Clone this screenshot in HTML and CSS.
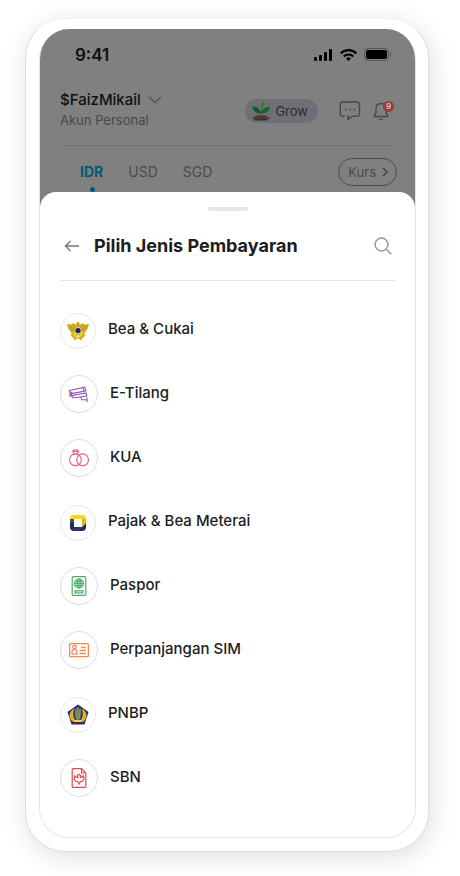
FILE: index.html
```html
<!DOCTYPE html>
<html lang="id">
<head>
    <meta charset="UTF-8">
    <meta name="viewport" content="width=device-width, initial-scale=1.0">
    <title>Pilih Jenis Pembayaran</title>
    <link rel="stylesheet" href="styles.css">
</head>
<body>
    <div class="phone">
        <div class="screen">
            <header class="home">
                <div class="status-bar">
                    <span class="time">9:41</span>
                    <svg class="status-icons" width="78" height="14" viewBox="0 0 78 14">
                        <rect x="0" y="9" width="3" height="4" rx="1"/>
                        <rect x="5" y="7" width="3" height="6" rx="1"/>
                        <rect x="10" y="4" width="3" height="9" rx="1"/>
                        <rect x="15" y="1" width="3" height="12" rx="1"/>
                        <g fill="none" stroke="#000" stroke-width="2.2">
                            <path d="M26.7 5.4a11 11 0 0 1 15.6 0"/>
                            <path d="M29.7 8.5a6.8 6.8 0 0 1 9.6 0"/>
                        </g>
                        <path d="M34.5 13l-2.5-2.6a3.6 3.6 0 0 1 5 0z"/>
                        <rect x="50.5" y=".5" width="24" height="12" rx="3.5" fill="none" stroke="#555"/>
                        <rect x="52" y="2" width="21" height="9" rx="2"/>
                        <path d="M76 4.5c1.600.6 1.600 3.400 0 4z" fill="#555"/>
                    </svg>
                </div>
                <div class="account">
                    <div class="account-info">
                        <button class="account-name" type="button">$FaizMikail
                            <svg width="14" height="8" viewBox="0 0 14 8"><path d="M1 1l6 5.500L13 1" fill="none" stroke="#555" stroke-width="1.500"/></svg>
                        </button>
                        <p class="account-type">Akun Personal</p>
                    </div>
                    <button class="grow" type="button">
                        <svg width="20" height="20" viewBox="0 0 20 20">
                            <path d="M2 17h16l-2 2.500H4z" fill="#35303a"/>
                            <path d="M1 16h18v1.400H1z" fill="#4f4852"/>
                            <ellipse cx="10" cy="15.500" rx="6.500" ry="1.300" fill="#5c3217"/>
                            <path d="M10 15.500c0-3 .4-5 1.200-8" fill="none" stroke="#24702f" stroke-width="1.200"/>
                            <path d="M10 12.500C6 13 2.500 10.500 1 5.500c5 0 8 2 9 7z" fill="#0c5d27"/>
                            <path d="M10.500 12c.5-4 3.500-6 8-6 0 4-3 7-8 6z" fill="#15672b"/>
                            <path d="M10.500 8C9 5 10 2 13 0c1.200 3 .5 6-2.500 8z" fill="#3a7b2a"/>
                        </svg>
                        Grow
                    </button>
                    <button class="chat" type="button" aria-label="Pesan">
                        <svg width="22" height="20" viewBox="0 0 22 20">
                            <path d="M5.500 15.300H3.500A2.200 2.200 0 0 1 1.300 13V3.300A2.200 2.200 0 0 1 3.500 1h14.800a2.200 2.200 0 0 1 2.200 2.300V13a2.200 2.200 0 0 1-2.200 2.300h-5L9 18.500v-3.200H8" fill="none" stroke="#484848" stroke-width="1.400"/>
                            <g fill="#484848"><circle cx="6.500" cy="8.500" r=".9"/><circle cx="11" cy="8.500" r=".9"/><circle cx="15.500" cy="8.500" r=".9"/></g>
                        </svg>
                    </button>
                    <button class="bell" type="button" aria-label="Notifikasi">
                        <svg width="16" height="20" viewBox="0 0 16 20">
                            <path d="M8 2.500C4.700 2.500 3 5 3 8v4l-1.800 2.500v1h13.600v-1L13 12V8c0-3-1.700-5.500-5-5.500z" fill="none" stroke="#484848" stroke-width="1.300" stroke-linejoin="round"/>
                            <path d="M6 17.500c.8 1.700 3.200 1.700 4 0" fill="none" stroke="#484848" stroke-width="1.300"/>
                        </svg>
                        <span class="badge">9</span>
                    </button>
                </div>
                <nav class="currencies">
                    <a class="currency active" href="#idr">IDR</a>
                    <a class="currency" href="#usd">USD</a>
                    <a class="currency" href="#sgd">SGD</a>
                    <button class="rates" type="button">Kurs
                        <svg width="6" height="10" viewBox="0 0 6 10"><path d="M1 .8L5 5 1 9.200" fill="none" stroke="#404040" stroke-width="1.400"/></svg>
                    </button>
                </nav>
            </header>

            <main class="sheet">
                <div class="handle"></div>
                <div class="sheet-header">
                    <button type="button" aria-label="Kembali">
                        <svg width="16" height="12" viewBox="0 0 16 12"><path d="M15 6H1.500M6.500 1l-5 5 5 5" fill="none" stroke="#777" stroke-width="1.400"/></svg>
                    </button>
                    <h1>Pilih Jenis Pembayaran</h1>
                    <button type="button" aria-label="Cari">
                        <svg width="18" height="18" viewBox="0 0 18 18"><circle cx="7.500" cy="7.500" r="6.400" fill="none" stroke="#999" stroke-width="1.500"/><path d="M12 12l5.300 5.300" stroke="#999" stroke-width="1.600"/></svg>
                    </button>
                </div>
                <ul class="payments">
                    <li><a class="payment" href="#bea-cukai">
                        <span class="logo small">
                            <svg width="24" height="24" viewBox="0 0 24 24">
                                <path d="M1 5l4 .5L8 4l2 2 1-3h2l1 3 2-2 3 1.500 4-.5-1.500 5-3 4 .5 3-2.500 2-1 2.500-2-1.500h-3l-2 1.500-1-2.500-2.500-2 .5-3-3-4z" fill="#d9ad18"/>
                                <path d="M2 6.500l7 4M3.500 9.500l5 2M22 6.500l-7 4M20.500 9.500l-5 2M12 3v5M7 6l3 3M17 6l-3 3" stroke="#a88717" stroke-width=".6" fill="none"/>
                                <path d="M8 13c0 3 1 4.500 4 5 3-.5 4-2 4-5" fill="none" stroke="#f4d958" stroke-width="1.300"/>
                                <circle cx="12" cy="11.500" r="3.600" fill="#c8c7c2"/>
                                <circle cx="12" cy="11.500" r="2.600" fill="#20274c"/>
                                <path d="M12 15.500v4" stroke="#fff" stroke-width=".8"/>
                            </svg>
                        </span>
                        <span class="name">Bea &amp; Cukai</span>
                    </a></li>
                    <li><a class="payment" href="#e-tilang">
                        <span class="logo">
                            <svg width="24" height="24" viewBox="0 0 24 24" fill="none" stroke="#9254b5" stroke-width="1.100">
                                <path d="M2.300 8.500l15.500-3.300 1.200 3.600-15.500 3zM4.500 12v1.500l14.500-2.500.8 3-13.800 2-1-2.500M16 6l1 3.200M5.500 10.200H3v4h2.500M13.800 15.200l1 2.500h5.200M20 15.500V20"/>
                            </svg>
                        </span>
                        <span class="name">E-Tilang</span>
                    </a></li>
                    <li><a class="payment" href="#kua">
                        <span class="logo">
                            <svg width="24" height="24" viewBox="0 0 24 24" fill="none" stroke="#f0618c" stroke-width="1.200">
                                <circle cx="8.400" cy="13.800" r="5.900"/>
                                <circle cx="15.600" cy="13.800" r="5.900"/>
                                <path d="M7 8L5.800 5.500 6.600 4.200h4l.8 1.300L10.200 8zM5.800 5.500h5.600"/>
                            </svg>
                        </span>
                        <span class="name">KUA</span>
                    </a></li>
                    <li><a class="payment" href="#pajak">
                        <span class="logo small">
                            <svg width="24" height="24" viewBox="0 0 24 24">
                                <path d="M4 8a4 4 0 0 1 4-4h8a4 4 0 0 1 4 4v8h-4V8H8l-4 4z" fill="#fbd713"/>
                                <path d="M4 8l4 3v5h8l4-4v4a4 4 0 0 1-4 4H8a4 4 0 0 1-4-4z" fill="#202a57"/>
                                <path d="M16 8h4v4l-4 4z" fill="#e9b713"/>
                                <path d="M8 8H4v4l4-1z" fill="#53502f"/>
                                <path d="M8 16h8l-2 4H8z" fill="#2b3766"/>
                            </svg>
                        </span>
                        <span class="name">Pajak &amp; Bea Meterai</span>
                    </a></li>
                    <li><a class="payment" href="#paspor">
                        <span class="logo">
                            <svg width="24" height="24" viewBox="0 0 24 24" fill="none" stroke="#4fad68" stroke-width="1.200">
                                <rect x="5.200" y="2.700" width="13.600" height="18.600" rx="1"/>
                                <circle cx="12" cy="9.500" r="4.500"/>
                                <ellipse cx="12" cy="9.500" rx="2" ry="4.500"/>
                                <path d="M12 5v9M7.500 9.500h9M8.200 7.300h7.600M8.200 11.700h7.600M8 18.800v-2h8v2z"/>
                            </svg>
                        </span>
                        <span class="name">Paspor</span>
                    </a></li>
                    <li><a class="payment" href="#sim">
                        <span class="logo">
                            <svg width="24" height="24" viewBox="0 0 24 24" fill="none" stroke="#ef8a55" stroke-width="1.300">
                                <rect x="2.600" y="5.600" width="18.800" height="13" rx="1.200"/>
                                <circle cx="7.500" cy="9" r="1.700"/>
                                <path d="M5 16.200v-2.500a2 2 0 0 1 2-2h1a2 2 0 0 1 2 2v2.500zM14 9.500h5M12.500 12.500H19M12.500 15.500H19"/>
                            </svg>
                        </span>
                        <span class="name">Perpanjangan SIM</span>
                    </a></li>
                    <li><a class="payment" href="#pnbp">
                        <span class="logo small">
                            <svg width="24" height="24" viewBox="0 0 24 24">
                                <path d="M12 1.500L22.500 9 18.500 21.500h-13L1.500 9z" fill="#332778"/>
                                <path d="M8.500 5.500c-6 3-6.500 9-2 13h11c4.500-4 4-10-2-13 2 4 1.500 9-1 12h-5c-2.500-3-3-8-1-12z" fill="#dfb51e"/>
                                <path d="M9.500 5h5l1 7-2 5h-3l-2-5z" fill="#316d78"/>
                                <path d="M12 4v14M9.800 6l.7 10M14.200 6l-.7 10" stroke="#d4b02c" stroke-width=".8"/>
                                <path d="M8 17h8v2H8z" fill="#f2cf42"/>
                            </svg>
                        </span>
                        <span class="name">PNBP</span>
                    </a></li>
                    <li><a class="payment" href="#sbn">
                        <span class="logo">
                            <svg width="24" height="24" viewBox="0 0 24 24" fill="none" stroke="#e34b4b" stroke-width="1.200">
                                <path d="M14.500 2.600H6.200a1 1 0 0 0-1 1v16.800a1 1 0 0 0 1 1h11.600a1 1 0 0 0 1-1V7zV7h4.300"/>
                                <path d="M10.300 9.500L12 8.300l1.700 1.200-.5 2h1.500l1.800-1.700.5 3.200-2 2.500h-1.500L12 18l-1.500-2.500H9L7 13l.5-3.200 1.800 1.700h1.500z"/>
                            </svg>
                        </span>
                        <span class="name">SBN</span>
                    </a></li>
                </ul>
            </main>
        </div>
    </div>
</body>
</html>
```
FILE: styles.css
```css
* { box-sizing: border-box; }
body { margin: 0; padding: 18px 31px 25px 25px; background: #fff; color: #1c1c1e; font-family: Inter, "Liberation Sans", sans-serif; }
h1, p, ul { margin: 0; padding: 0; }
ul { list-style: none; }
a { color: inherit; text-decoration: none; }
button { display: flex; align-items: center; margin: 0; padding: 0; border: none; background: none; color: inherit; font: inherit; cursor: pointer; }
svg { display: block; flex: none; }

.phone { padding: 10px 12px 13px 13px; border: 1px solid #dedede; border-top-color: #f2f2f2; border-radius: 40px; background: #fff; box-shadow: 2px 5px 26px rgba(0, 0, 0, 0.13); }
.screen { overflow: hidden; border: 1px solid #e4e4e4; border-top: none; border-radius: 30px; background: #fff; }

.home { padding: 0 20px 16px; background: #808080; }
.status-bar { display: flex; align-items: center; justify-content: space-between; height: 52px; padding: 0 3px 0 15px; }
.time { color: #101011; font-size: 17px; font-weight: 600; line-height: 20px; }

.account { display: flex; align-items: center; height: 65px; padding-right: 6px; padding-bottom: 4px; border-bottom: 1px solid #727272; }
.account-info { flex: 1; padding-bottom: 3px; }
.account-name { gap: 7px; color: #101011; font-size: 15px; font-weight: 500; line-height: 20px; }
.account-type { color: #484848; font-size: 13px; line-height: 20px; }
.grow { gap: 4px; height: 24px; padding: 0 10px 0 6px; border-radius: 12px; background: #716e78; color: #2c2c2e; font-size: 13px; }
.chat { margin: 0 12px 0 21px; }
.bell { position: relative; }
.badge { position: absolute; top: 0; right: -5px; width: 11px; height: 11px; border-radius: 50%; background: #9c3c3c; color: #ccc; font-size: 8px; font-weight: 600; line-height: 11px; text-align: center; }

.currencies { display: flex; align-items: center; gap: 25px; height: 46px; padding-top: 6px; padding-left: 20px; color: #4c4c4c; font-size: 14px; line-height: 20px; }
.currency { position: relative; }
.active { color: #00597a; font-weight: 700; }
.active::after { content: ""; position: absolute; top: 25px; left: 50%; width: 5px; height: 5px; margin-left: -2px; border-radius: 50%; background: #00597a; }
.rates { gap: 6px; height: 28px; margin-left: auto; margin-right: -2px; padding: 0 8px 0 9px; border: 1px solid #4c4c4c; border-radius: 14px; font-size: 13px; }

.sheet { position: relative; margin-top: -16px; padding: 15px 20px 40px; border-radius: 16px 16px 0 0; background: #fff; }
.handle { width: 40px; height: 4px; margin: 0 auto; border-radius: 2px; background: #e6e6e6; }
.sheet-header { display: flex; align-items: center; height: 70px; padding: 0 3px 0 4px; border-bottom: 1px solid #e6e6e6; }
.sheet-header h1 { flex: 1; margin-left: 14px; font-size: 18px; font-weight: 700; line-height: 24px; }

.payments { display: grid; gap: 26px; padding-top: 30px; }
.payment { display: flex; gap: 12px; height: 38px; }
.logo { display: flex; align-items: center; justify-content: center; width: 38px; height: 38px; border: 1px solid #dedede; border-radius: 50%; }
.logo.small { align-self: flex-end; width: 36px; height: 36px; border-color: #e8e8e8; }
.name { font-size: 15px; font-weight: 500; line-height: 36px; }
```
